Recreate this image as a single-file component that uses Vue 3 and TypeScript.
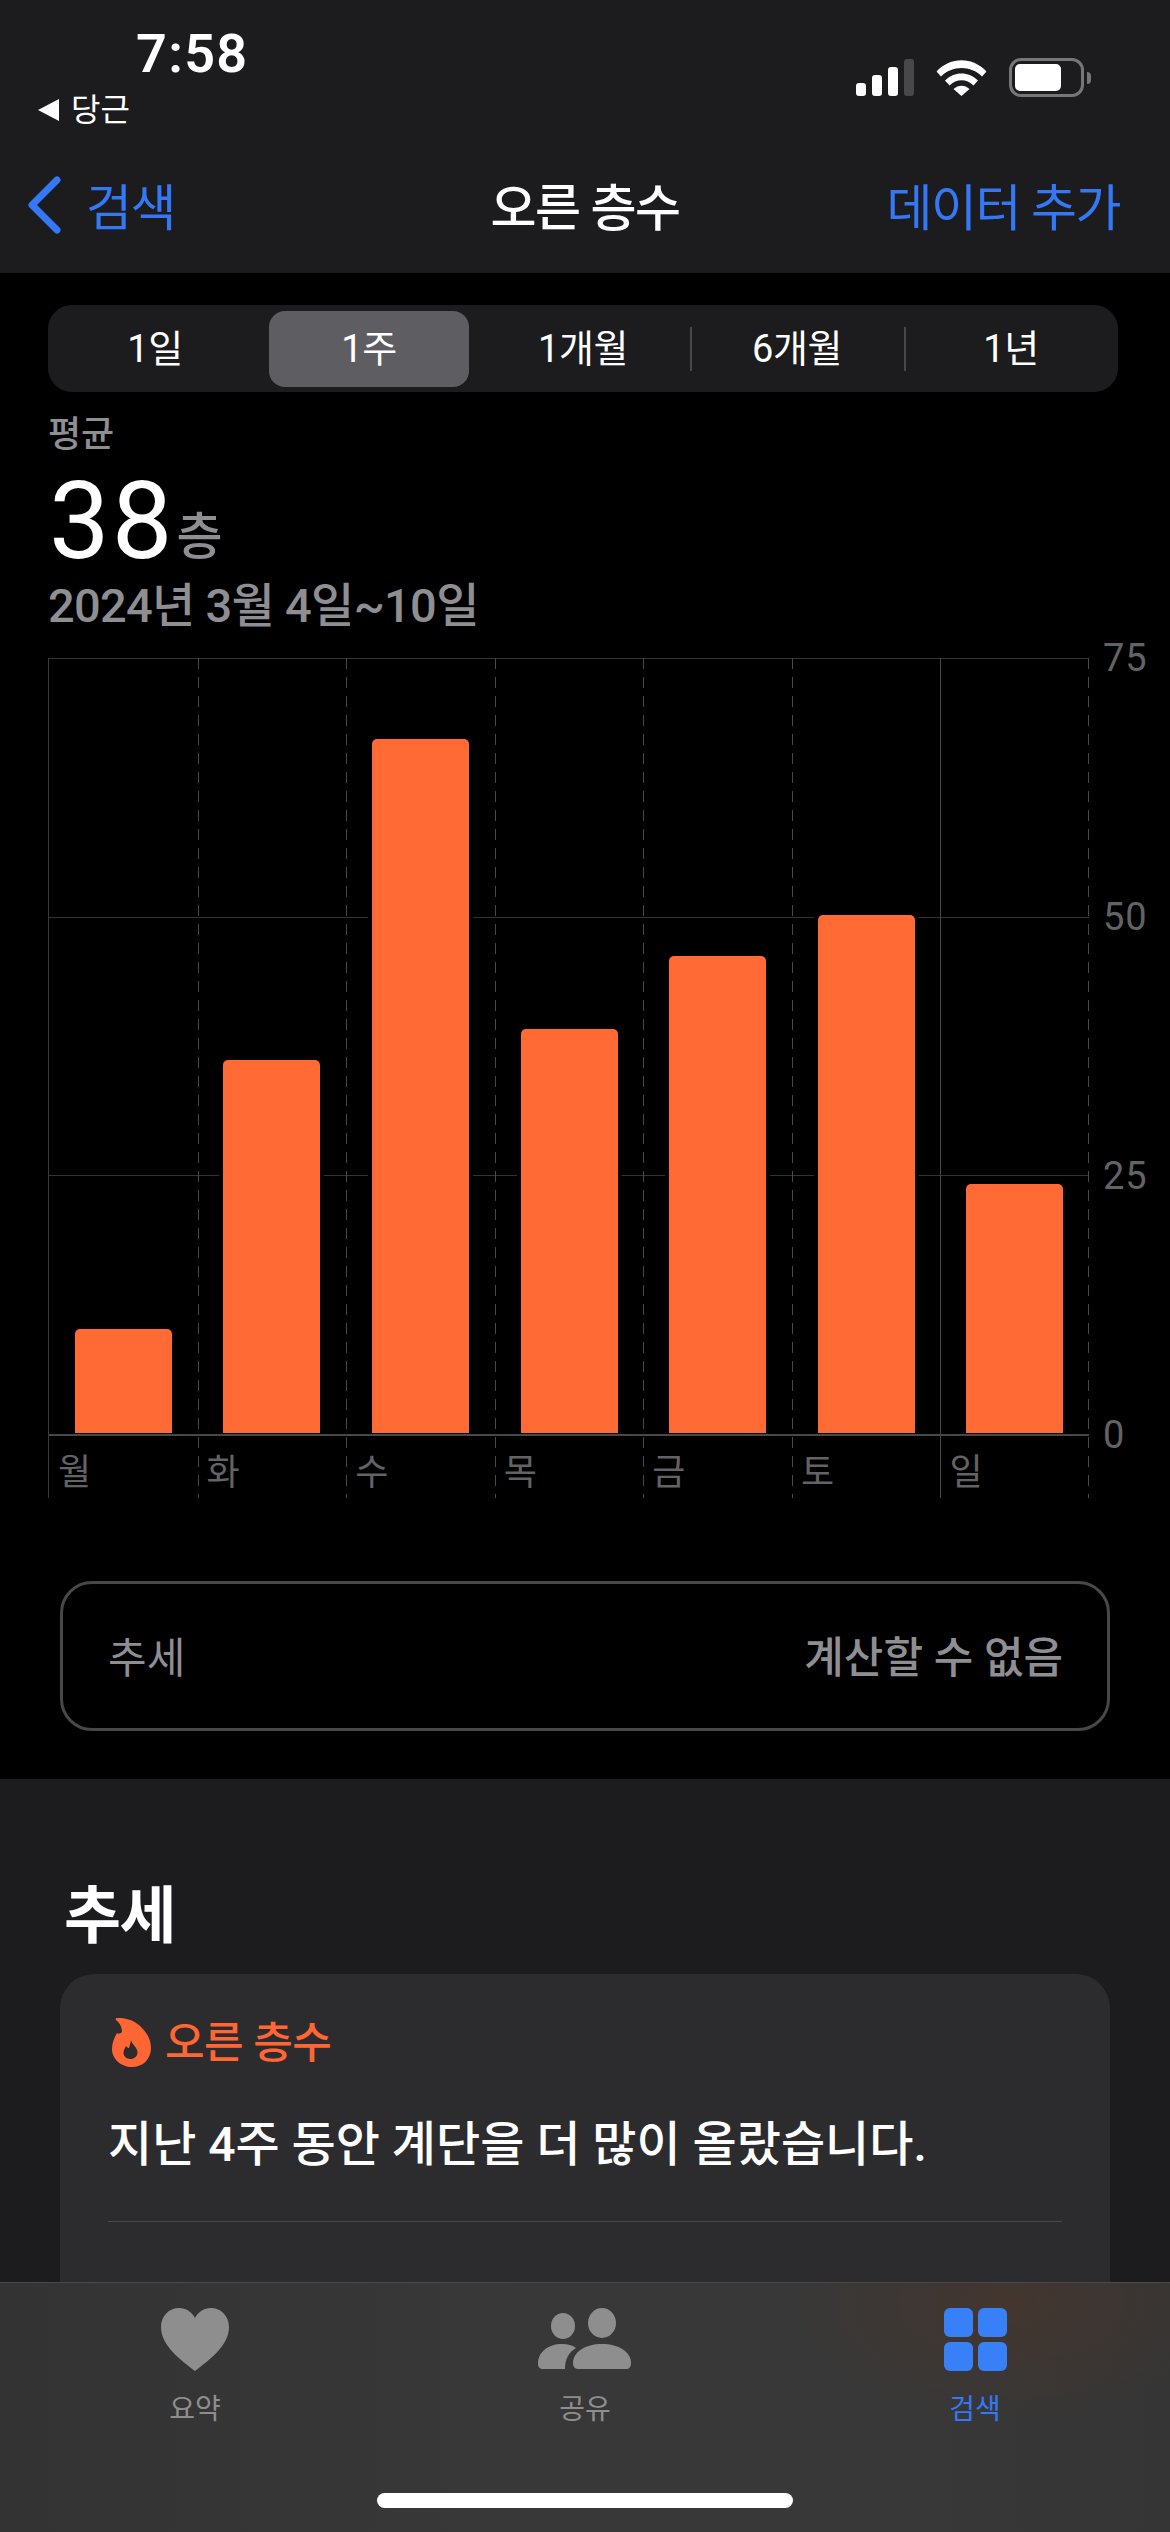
<script setup lang="ts">
const ranges = ["1일", "1주", "1개월", "6개월", "1년"];

const days = [
  { label: "월", value: 10 },
  { label: "화", value: 36 },
  { label: "수", value: 67 },
  { label: "목", value: 39 },
  { label: "금", value: 46 },
  { label: "토", value: 50 },
  { label: "일", value: 24 },
];

const axis = [75, 50, 25, 0];
const rowHeight = 259;

function barHeight(value: number) {
  return Math.round((value / 25) * rowHeight) + "px";
}
</script>

<template>
  <div class="screen">
    <header class="top">
      <div class="status">
        <div class="status-left">
          <div class="time">7:58</div>
          <div class="back-app"><span class="tri"></span>당근</div>
        </div>
        <div class="status-right">
          <div class="signal">
            <i class="b1"></i><i class="b2"></i><i class="b3"></i><i class="b4"></i>
          </div>
          <svg class="wifi" width="51" height="37" viewBox="0 0 51 37">
            <path d="M0.5 12.5C14.5 -2.5 36.5 -2.5 50.5 12.5L46 17.5C35 6 16 6 5 17.5Z" fill="#fff" />
            <path d="M9 21.5C18 12 33 12 42 21.5L37.5 26.5C30.5 19.5 20.5 19.5 13.5 26.5Z" fill="#fff" />
            <path d="M17.5 30C22 25.5 29 25.5 33.5 30L25.5 37Z" fill="#fff" />
          </svg>
          <div class="battery"><div class="battery-fill"></div></div>
          <div class="battery-nub"></div>
        </div>
      </div>
      <nav class="nav">
        <div class="nav-back">
          <svg width="36" height="60" viewBox="0 0 36 60">
            <path d="M31 5L6 30L31 55" fill="none" stroke="#3478f6" stroke-width="7" stroke-linecap="round" stroke-linejoin="round" />
          </svg>
          <span class="nav-text">검색</span>
        </div>
        <div class="nav-title nav-text">오른 층수</div>
        <div class="nav-add nav-text">데이터 추가</div>
      </nav>
    </header>

    <section class="main">
      <div class="segments">
        <div
          v-for="(r, i) in ranges"
          :key="r"
          class="segment"
          :class="{ active: i === 1, divided: i === 3 || i === 4 }"
        >
          <div class="segment-label">{{ r }}</div>
        </div>
      </div>

      <div class="avg-label">평균</div>
      <div class="avg"><span class="avg-num">38</span><span class="avg-unit">층</span></div>
      <div class="date">2024년 3월 4일~10일</div>

      <div class="chart">
        <div class="plot">
          <div class="grid-lines">
            <i v-for="a in axis" :key="a"></i>
          </div>
          <div
            v-for="(d, i) in days"
            :key="d.label"
            class="day"
            :class="{ week: i === 6 }"
          >
            <div class="bar-area">
              <div class="bar" :style="{ height: barHeight(d.value) }"></div>
            </div>
            <div class="day-label">{{ d.label }}</div>
          </div>
          <div class="end-line"></div>
        </div>
        <div class="axis">
          <span v-for="a in axis" :key="a">{{ a }}</span>
        </div>
      </div>

      <div class="trend-box">
        <span class="trend-name">추세</span>
        <span class="trend-value">계산할 수 없음</span>
      </div>
    </section>

    <section class="trends">
      <h2>추세</h2>
      <div class="card">
        <div class="card-head">
          <svg width="39" height="49" viewBox="0 0 39 49">
            <path
              fill-rule="evenodd"
              fill="#ff6633"
              d="M5 0C14 -0.5 24 3 30 10C36 16 39 23 39 30C39 41 31 49 20 49C9 49 0 41 0 31C0 25 2 20 5 15C6 16 8 16 10 14C10 9 8 5 4 2C3.5 1 4 0 5 0ZM19 22C18.5 25 18 27 17 30C16 30 15 29.5 14 28C13 30 11.5 32 11.5 35C11.5 38 14.5 41 18.5 41C22 41 25.5 38.5 25.5 34.5C25.5 29 20 27 19 22Z"
            />
          </svg>
          <span>오른 층수</span>
        </div>
        <p class="card-text">지난 4주 동안 계단을 더 많이 올랐습니다.</p>
        <div class="card-line"></div>
      </div>
    </section>

    <footer class="tabbar">
      <div class="tab">
        <svg width="68" height="63" viewBox="0 0 68 63">
          <path d="M34 63C20 52 0 38 0 19C0 8 8 0 18 0C25 0 31 4 34 10C37 4 43 0 50 0C60 0 68 8 68 19C68 38 48 52 34 63Z" fill="#8e8e8e" />
        </svg>
        <span>요약</span>
      </div>
      <div class="tab">
        <svg width="94" height="62" viewBox="0 0 94 62">
          <ellipse cx="25" cy="18" rx="12" ry="13" fill="#8e8e8e" />
          <ellipse cx="64" cy="15" rx="14" ry="15" fill="#8e8e8e" />
          <path d="M0 56C0 44 10 36 24 36C30 36 34 37 38 40C31 44 27 51 27 61H5C2 61 0 59 0 56Z" fill="#8e8e8e" />
          <path d="M35 55C35 44 47 36 64 36C81 36 93 44 93 55C93 59 91 61 88 61H41C37 61 35 59 35 55Z" fill="#8e8e8e" />
        </svg>
        <span>공유</span>
      </div>
      <div class="tab current">
        <div class="grid-icon"><i></i><i></i><i></i><i></i></div>
        <span>검색</span>
      </div>
      <div class="home-bar"></div>
    </footer>
  </div>
</template>

<style scoped>
.screen {
  position: relative;
  width: 1170px;
  height: 2532px;
  overflow: hidden;
  background: #1c1c1e;
  color: #fff;
  font-family: Roboto, "Noto Sans CJK KR", sans-serif;
}

.top {
  height: 273px;
  background: #1c1c1e;
}

.status {
  display: flex;
  justify-content: space-between;
  height: 170px;
}

.status-left {
  padding-left: 38px;
}

.time {
  margin-left: 98px;
  padding-top: 24px;
  font-size: 54px;
  line-height: 60px;
  font-weight: 600;
  letter-spacing: 1.3px;
}

.back-app {
  display: flex;
  align-items: center;
  gap: 12px;
  margin-top: 7px;
  font-size: 32px;
  line-height: 38px;
}

.tri {
  width: 0;
  height: 0;
  border-top: 11px solid transparent;
  border-bottom: 11px solid transparent;
  border-right: 21px solid #fff;
}

.status-right {
  display: flex;
  align-items: flex-start;
  padding: 58px 79px 0 0;
}

.signal {
  display: flex;
  align-items: flex-end;
  gap: 6px;
  height: 37px;
  margin-top: 1px;
}

.signal i {
  display: block;
  width: 10px;
  border-radius: 3px;
  background: #fff;
}

.b1 { height: 13px; }
.b2 { height: 21px; }
.b3 { height: 29px; }
.b4 { height: 37px; background: #48484a !important; }

.wifi {
  margin: 1px 0 0 22px;
}

.battery {
  box-sizing: border-box;
  width: 75px;
  height: 39px;
  margin-left: 22px;
  padding: 3px;
  border: 3px solid #767678;
  border-radius: 12px;
}

.battery-fill {
  width: 46px;
  height: 27px;
  border-radius: 5px;
  background: #fff;
}

.battery-nub {
  width: 4px;
  height: 12px;
  margin: 14px 0 0 3px;
  border-radius: 0 6px 6px 0;
  background: #767678;
}

.nav {
  display: flex;
  align-items: center;
  justify-content: space-between;
  height: 70px;
  padding: 0 50px 0 26px;
}

.nav-text {
  margin-top: -3px;
  font-size: 50px;
  letter-spacing: -1.5px;
}

.nav-back {
  display: flex;
  align-items: center;
  gap: 24px;
  width: 324px;
  color: #3478f6;
}

.nav-title {
  font-weight: 500;
}

.nav-add {
  width: 300px;
  text-align: right;
  color: #3478f6;
  white-space: nowrap;
}

.main {
  height: 1506px;
  padding: 32px 0 0 48px;
  box-sizing: border-box;
  background: #000;
}

.segments {
  display: flex;
  align-items: center;
  width: 1070px;
  height: 87px;
  border-radius: 24px;
  background: #1c1c1e;
}

.segment {
  position: relative;
  box-sizing: border-box;
  flex: 0 0 214px;
  padding: 0 7px;
}

.segment-label {
  height: 76px;
  line-height: 77px;
  text-align: center;
  font-size: 38px;
  letter-spacing: -0.5px;
  border-radius: 16px;
}

.segment.active .segment-label {
  background: #5e5e62;
}

.segment.divided::before {
  content: "";
  position: absolute;
  left: 0;
  top: 16px;
  bottom: 16px;
  width: 2px;
  background: #48484a;
}

.avg-label {
  margin-top: 20px;
  font-size: 36px;
  line-height: 46px;
  font-weight: 500;
  color: #8e8e93;
}

.avg {
  display: flex;
  align-items: flex-start;
  margin-top: 6px;
  height: 114px;
  line-height: 114px;
}

.avg-num {
  margin-left: 1px;
  font-size: 108px;
  letter-spacing: 2px;
}

.avg-unit {
  margin: 43px 0 0 2px;
  font-size: 50px;
  line-height: 60px;
  font-weight: 500;
  color: #8e8e93;
}

.date {
  margin-top: -2px;
  font-size: 47px;
  line-height: 60px;
  font-weight: 500;
  letter-spacing: -0.7px;
  color: #8e8e93;
}

.chart {
  display: flex;
  margin-top: 22px;
}

.plot {
  position: relative;
  display: flex;
  width: 1040px;
  height: 840px;
  border-left: 1px solid #3a3a3c;
}

.grid-lines {
  position: absolute;
  left: 0;
  right: 0;
  top: 0;
  height: 778px;
  display: flex;
  flex-direction: column;
  justify-content: space-between;
}

.grid-lines i {
  display: block;
  height: 1px;
  background: #333335;
}

.grid-lines i:last-child {
  height: 2px;
  background: #48484a;
}

.day {
  position: relative;
  flex: 1;
  display: flex;
  flex-direction: column;
}

.day + .day::before,
.end-line {
  content: "";
  position: absolute;
  top: 0;
  bottom: 0;
  left: 0;
  width: 1px;
  background: repeating-linear-gradient(#48484a 0 11px, transparent 11px 19px);
}

.day.week::before {
  background: #48484a;
}

.end-line {
  left: auto;
  right: 0;
}

.bar-area {
  position: relative;
  height: 778px;
  display: flex;
  align-items: flex-end;
  justify-content: center;
}

.bar {
  width: 97px;
  border-radius: 5px 5px 0 0;
  background: #ff6a35;
  box-shadow: 0 0 0 4px #000;
  clip-path: inset(-4px -4px 0 -4px);
}

.day-label {
  padding: 15px 0 0 9px;
  font-size: 36px;
  line-height: 50px;
  color: #636366;
}

.axis {
  display: flex;
  flex-direction: column;
  justify-content: space-between;
  height: 778px;
  padding-left: 14px;
  font-size: 38px;
  letter-spacing: 1px;
  color: #636366;
}

.axis span {
  display: block;
  height: 1px;
  line-height: 1px;
}

.trend-box {
  display: flex;
  align-items: center;
  justify-content: space-between;
  box-sizing: border-box;
  width: 1050px;
  height: 150px;
  margin: 83px 0 0 12px;
  padding: 0 44px 4px 45px;
  border: 3px solid #48484a;
  border-radius: 32px;
  font-size: 43px;
  color: #8e8e93;
}

.trend-name {
  font-size: 42px;
}

.trend-value {
  font-weight: 500;
}

.trends {
  padding: 98px 60px 0;
}

.trends h2 {
  margin: 0 0 0 4px;
  height: 97px;
  font-size: 62px;
  line-height: 80px;
  font-weight: 700;
  letter-spacing: -1.5px;
}

.card {
  box-sizing: border-box;
  width: 1050px;
  height: 400px;
  padding: 44px 48px 0;
  border-radius: 34px;
  background: #2c2c2e;
}

.card-head {
  display: flex;
  align-items: flex-start;
  gap: 14px;
  height: 49px;
  font-size: 43px;
  line-height: 50px;
  font-weight: 500;
  letter-spacing: -0.5px;
  color: #ff6633;
  margin-left: 4px;
}

.card-text {
  margin: 43px 0 0;
  font-size: 48px;
  line-height: 70px;
  font-weight: 500;
}

.card-line {
  height: 1px;
  margin-top: 41px;
  background: #48484a;
}

.tabbar {
  position: absolute;
  left: 0;
  right: 0;
  bottom: 0;
  height: 250px;
  display: flex;
  padding: 25px 0 0;
  box-sizing: border-box;
  border-top: 1px solid #4a4a4a;
  background: radial-gradient(ellipse 220px 120px at 1010px 20px, #43362f 0%, transparent 100%), linear-gradient(90deg, #333 0%, #383838 45%, #383838 75%, #353535 100%);
}

.tab {
  flex: 1;
  display: flex;
  flex-direction: column;
  align-items: center;
  height: 118px;
  justify-content: space-between;
  color: #8e8e8e;
  font-size: 28px;
}

.tab span {
  line-height: 32px;
}

.tab.current {
  color: #3478f6;
}

.grid-icon {
  display: grid;
  grid-template-columns: 29px 29px;
  grid-auto-rows: 29px;
  gap: 5px;
}

.grid-icon i {
  border-radius: 6px;
  background: #3880f8;
}

.home-bar {
  position: absolute;
  left: 377px;
  bottom: 24px;
  width: 416px;
  height: 15px;
  border-radius: 8px;
  background: #fff;
}
</style>

<style>
body {
  background: #000;
}
</style>
